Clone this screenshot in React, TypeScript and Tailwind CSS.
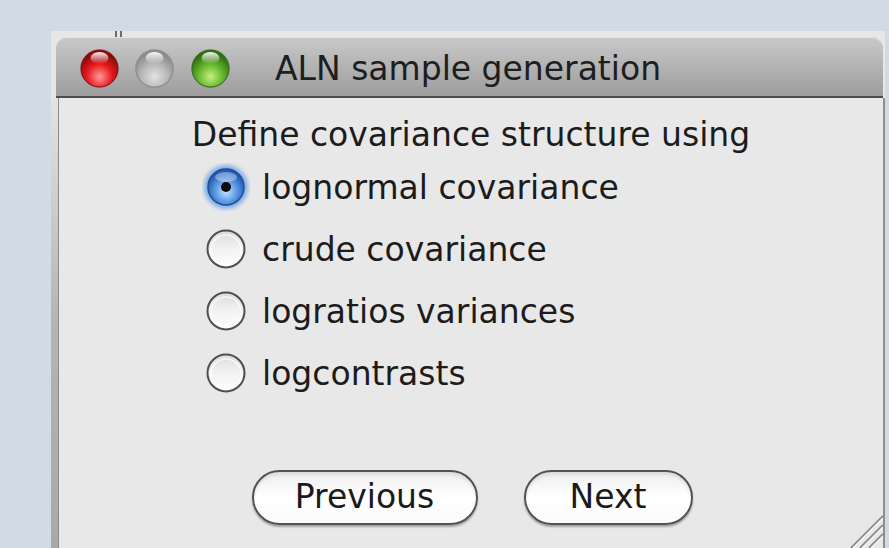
import React from 'react'

const Light = ({ cx, dark, mid, glow }: { cx: number; dark: string; mid: string; glow: string }) => {
  const id = `l${cx}`
  return (
    <g>
      <defs>
        <radialGradient id={id} cx="50%" cy="72%" r="62%">
          <stop offset="0%" stopColor={glow} />
          <stop offset="55%" stopColor={mid} />
          <stop offset="100%" stopColor={dark} />
        </radialGradient>
        <linearGradient id={`${id}h`} x1="0" y1="0" x2="0" y2="1">
          <stop offset="0%" stopColor="#ffffff" stopOpacity="0.95" />
          <stop offset="100%" stopColor="#ffffff" stopOpacity="0" />
        </linearGradient>
      </defs>
      <circle cx={cx} cy={31.5} r={19.5} fill="#000" opacity="0.12" />
      <circle cx={cx} cy={31.5} r={18.5} fill={`url(#${id})`} stroke={dark} strokeWidth="1" />
      <ellipse cx={cx} cy={21} rx={9} ry={6} fill={`url(#${id}h)`} />
    </g>
  )
}

const TrafficLights = () => (
  <svg width="180" height="59" className="absolute left-0 top-0">
    <Light cx={43.5} dark="#8c0a0a" mid="#e8191c" glow="#ff9a9a" />
    <Light cx={98.5} dark="#8d8d8d" mid="#b9b9b9" glow="#e2e2e2" />
    <Light cx={154.5} dark="#2f6e10" mid="#63b52b" glow="#c6f080" />
  </svg>
)

const Radio = ({ checked }: { checked?: boolean }) =>
  checked ? (
    <svg width="48" height="48" viewBox="0 0 48 48" className="-m-[4px] shrink-0">
      <defs>
        <radialGradient id="rg" cx="50%" cy="62%" r="55%">
          <stop offset="0%" stopColor="#c6e4ff" />
          <stop offset="45%" stopColor="#6aa8ec" />
          <stop offset="100%" stopColor="#2059b3" />
        </radialGradient>
        <filter id="gl" x="-30%" y="-30%" width="160%" height="160%">
          <feGaussianBlur stdDeviation="2" />
        </filter>
      </defs>
      <circle cx="24" cy="24" r="22" fill="#5b9ae6" opacity="0.75" filter="url(#gl)" />
      <circle cx="24" cy="24" r="18" fill="url(#rg)" stroke="#214f93" strokeWidth="1.5" />
      <ellipse cx="24" cy="14" rx="11" ry="5" fill="#ffffff" opacity="0.35" />
      <circle cx="24" cy="24" r="5" fill="#0a0a0a" />
    </svg>
  ) : (
    <svg width="40" height="40" viewBox="0 0 40 40" className="shrink-0">
      <defs>
        <linearGradient id="rw" x1="0" y1="0" x2="0" y2="1">
          <stop offset="0%" stopColor="#dcdcdc" />
          <stop offset="50%" stopColor="#f2f2f2" />
          <stop offset="100%" stopColor="#ffffff" />
        </linearGradient>
      </defs>
      <circle cx="20" cy="20" r="18.5" fill="url(#rw)" stroke="#4f4f4f" strokeWidth="2" />
      <circle cx="20" cy="21" r="15" fill="none" stroke="#ffffff" strokeWidth="1.5" opacity="0.7" />
    </svg>
  )

const options = ['lognormal covariance', 'crude covariance', 'logratios variances', 'logcontrasts']

const AquaButton = ({ label, width }: { label: string; width: string }) => (
  <button
    className={`${width} flex h-[55px] items-center justify-center rounded-full border-2 border-[#525252] bg-gradient-to-b from-[#eeeeee] via-[#ffffff] to-[#fbfbfb] pb-[2px] text-[33px] leading-none text-[#1a1a1a] shadow-[0_2px_2px_rgba(0,0,0,0.3),inset_0_3px_3px_rgba(0,0,0,0.08)]`}
  >
    {label}
  </button>
)

export default function App() {
  return (
    <div className="h-[548px] w-[889px] overflow-hidden bg-[#d1dbe6] pl-[51px] pt-[31px] font-['DejaVu_Sans',sans-serif]">
      <div className="flex h-[517px] w-[834px] flex-col">
        {/* outer frame top band with the little grip marks */}
        <div className="relative h-[6px] bg-[#e7e7e7]">
          <div className="absolute left-[64px] top-0 h-[6px] w-[2px] bg-[#6b6b6b]" />
          <div className="absolute left-[69px] top-0 h-[6px] w-[2px] bg-[#6b6b6b]" />
        </div>

        <div className="flex bg-[#e7e7e7] pl-[5px] pr-[2px]">
          <div className="relative flex h-[61px] flex-1 items-start rounded-t-[11px] border-b-2 border-[#4e4e4e] bg-gradient-to-b from-[#c9c9c9] to-[#9d9d9d] shadow-[inset_0_1px_0_#e2e2e2]">
            <TrafficLights />
            <span className="ml-[219px] mt-[15px] text-[33px] leading-[33px] text-[#1e1e1e]">
              ALN sample generation
            </span>
          </div>
        </div>

        <div className="flex flex-1">
          <div className="w-[7px] bg-gradient-to-b from-[#e4e4e4] via-[#b4b4b4] to-[#a9a9a9]" />
          <div className="relative flex flex-1 flex-col items-center border-l border-[#8c8c8c] bg-[#e8e8e8] pt-[20px]">
            <div className="h-[33px] text-[33px] leading-[33px] text-[#1c1c1c]">
              Define covariance structure using
            </div>

            <div className="mt-[5px] flex flex-col self-start pl-[147px]">
              {options.map((opt, i) => (
                <div key={opt} className="flex h-[62px] items-center gap-[16px]">
                  <Radio checked={i === 0} />
                  <span className="text-[33px] leading-[33px] text-[#1c1c1c]">{opt}</span>
                </div>
              ))}
            </div>

            <div className="ml-[2px] mt-[66px] flex gap-[46px]">
              <AquaButton label="Previous" width="w-[226px]" />
              <AquaButton label="Next" width="w-[169px]" />
            </div>

            {/* resize grip */}
            <svg width="40" height="34" className="absolute bottom-0 right-0">
              <path d="M8 34 L40 2 M17 34 L40 11 M26 34 L40 20" stroke="#8a8a8a" strokeWidth="2" />
              <path d="M10 34 L40 4 M19 34 L40 13 M28 34 L40 22" stroke="#f8f8f8" strokeWidth="1.2" />
            </svg>
          </div>
          <div className="w-[2px] bg-[#8f8f8f]" />
        </div>
      </div>
    </div>
  )
}
